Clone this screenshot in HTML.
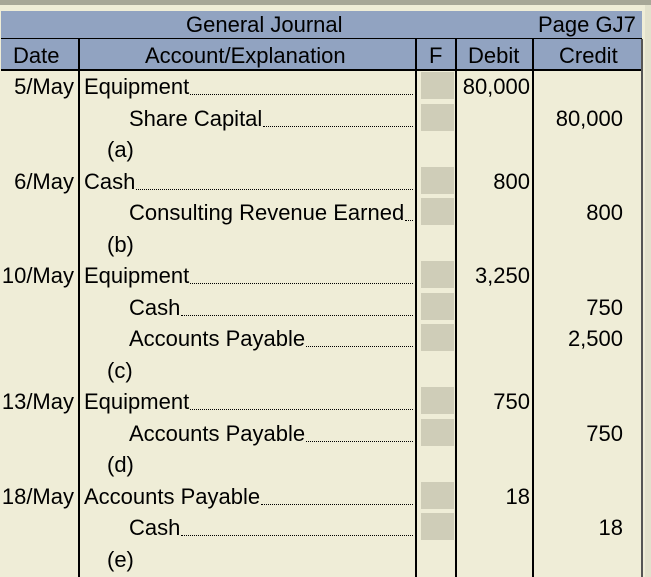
<!DOCTYPE html>
<html><head><style>
body{margin:0;width:651px;height:577px;background:#efedd7;font-family:"Liberation Sans",Arial,sans-serif;font-size:22px;color:#000;position:relative;overflow:hidden}
.a{position:absolute}
.topbar{left:0;top:0;width:651px;height:5px;background:#a7a797}
.rb{left:645px;top:5px;width:6px;height:572px;background:#e2e1cc}
.hdr{left:1px;top:11px;width:641px;height:59px;background:#91a3c1}
.vl{position:absolute;width:2px;background:#000}
.hl{position:absolute;height:2px;background:#000}
.row{position:absolute;left:0;width:651px;height:31.5px}
.d{position:absolute;right:577px;top:4px;white-space:nowrap}
.t{position:absolute;top:4px;white-space:nowrap;display:flex;align-items:flex-end}
.t.l{right:238px}
.t span.dot{flex:1;border-bottom:1px dotted #000;margin-bottom:5px;margin-left:1px;height:1px}
.f{position:absolute;left:421px;top:2px;width:33px;height:27px;background:#cfcdb8}
.db{position:absolute;right:121px;top:4px}
.cr{position:absolute;right:28px;top:4px}
</style></head><body>
<div class="a topbar"></div>
<div class="a rb"></div>
<div class="a hdr"></div>
<div class="a" style="left:186px;top:12px">General Journal</div>
<div class="a" style="left:538px;top:12px">Page GJ7</div>
<div class="hl" style="left:1px;top:38px;width:641px;height:1px"></div>
<div class="hl" style="left:1px;top:69px;width:641px;height:2px"></div>
<div class="a" style="left:13px;top:43px">Date</div>
<div class="a" style="left:145px;top:43px">Account/Explanation</div>
<div class="a" style="left:429px;top:43px">F</div>
<div class="a" style="left:468px;top:43px">Debit</div>
<div class="a" style="left:559px;top:43px">Credit</div>
<div class="vl" style="left:78px;top:39px;height:538px"></div>
<div class="vl" style="left:415px;top:39px;height:538px"></div>
<div class="vl" style="left:455px;top:39px;height:538px"></div>
<div class="vl" style="left:532px;top:39px;height:538px"></div>
<div class="vl" style="left:641px;top:39px;height:538px;background:#555"></div>

<div class="row" style="top:70px"><div class="d">5/May</div><div class="t l" style="left:84px">Equipment<span class="dot"></span></div><div class="f"></div><div class="db">80,000</div></div>
<div class="row" style="top:101.5px"><div class="t l" style="left:129px">Share Capital<span class="dot"></span></div><div class="f"></div><div class="cr">80,000</div></div>
<div class="row" style="top:133px"><div class="t" style="left:107px">(a)</div></div>
<div class="row" style="top:164.5px"><div class="d">6/May</div><div class="t l" style="left:84px">Cash<span class="dot"></span></div><div class="f"></div><div class="db">800</div></div>
<div class="row" style="top:196px"><div class="t l" style="left:129px">Consulting Revenue Earned<span class="dot"></span></div><div class="f"></div><div class="cr">800</div></div>
<div class="row" style="top:227.5px"><div class="t" style="left:107px">(b)</div></div>
<div class="row" style="top:259px"><div class="d">10/May</div><div class="t l" style="left:84px">Equipment<span class="dot"></span></div><div class="f"></div><div class="db">3,250</div></div>
<div class="row" style="top:290.5px"><div class="t l" style="left:129px">Cash<span class="dot"></span></div><div class="f"></div><div class="cr">750</div></div>
<div class="row" style="top:322px"><div class="t l" style="left:129px">Accounts Payable<span class="dot"></span></div><div class="f"></div><div class="cr">2,500</div></div>
<div class="row" style="top:353.5px"><div class="t" style="left:107px">(c)</div></div>
<div class="row" style="top:385px"><div class="d">13/May</div><div class="t l" style="left:84px">Equipment<span class="dot"></span></div><div class="f"></div><div class="db">750</div></div>
<div class="row" style="top:416.5px"><div class="t l" style="left:129px">Accounts Payable<span class="dot"></span></div><div class="f"></div><div class="cr">750</div></div>
<div class="row" style="top:448px"><div class="t" style="left:107px">(d)</div></div>
<div class="row" style="top:479.5px"><div class="d">18/May</div><div class="t l" style="left:84px">Accounts Payable<span class="dot"></span></div><div class="f"></div><div class="db">18</div></div>
<div class="row" style="top:511px"><div class="t l" style="left:129px">Cash<span class="dot"></span></div><div class="f"></div><div class="cr">18</div></div>
<div class="row" style="top:542.5px"><div class="t" style="left:107px">(e)</div></div>
</body></html>
